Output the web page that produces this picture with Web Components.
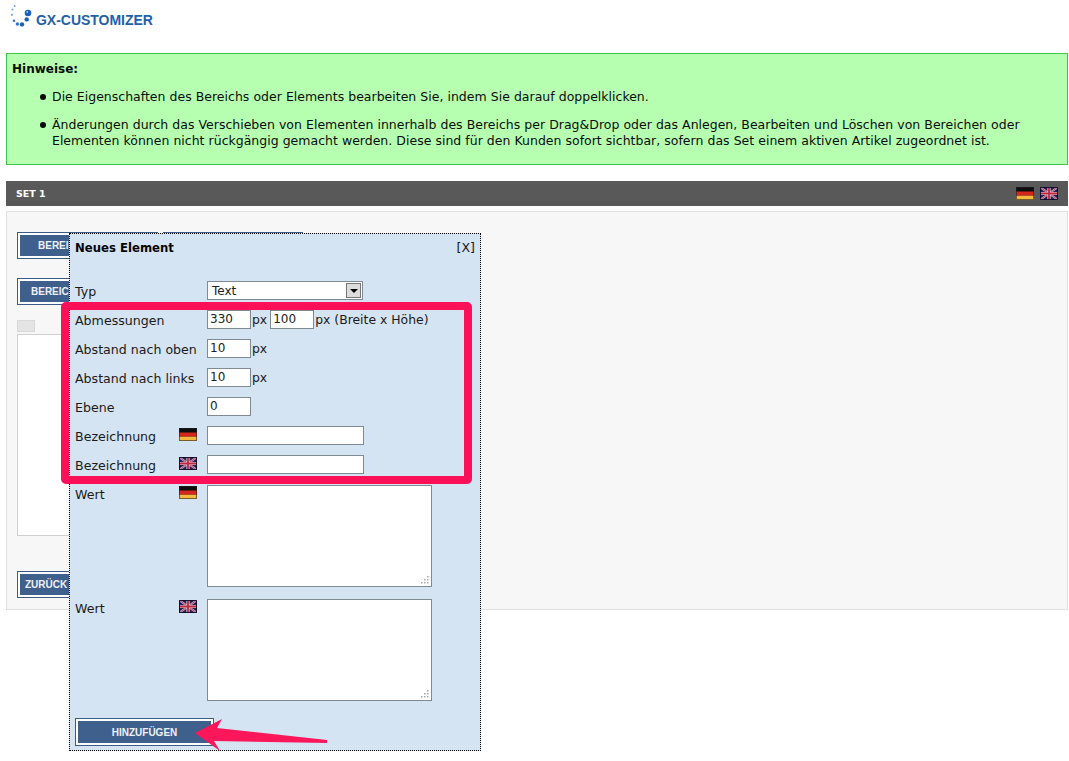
<!DOCTYPE html>
<html lang="de"><head><meta charset="utf-8"><title>GX-Customizer</title>
<style>
html,body{margin:0;padding:0;background:#fff}
body{font:12px "DejaVu Sans",Verdana,sans-serif;color:#111;width:1069px;height:761px;overflow:hidden;position:relative}
</style></head><body>
<gx-page>
  <gx-header slot="header">GX-CUSTOMIZER</gx-header>
  <gx-notice slot="notice" title-text="Hinweise:">
    <li>Die Eigenschaften des Bereichs oder Elements bearbeiten Sie, indem Sie darauf doppelklicken.</li>
    <li>Änderungen durch das Verschieben von Elementen innerhalb des Bereichs per Drag&amp;Drop oder das Anlegen, Bearbeiten und Löschen von Bereichen oder Elementen können nicht rückgängig gemacht werden. Diese sind für den Kunden sofort sichtbar, sofern das Set einem aktiven Artikel zugeordnet ist.</li>
  </gx-notice>
  <gx-setbar slot="bar">SET 1</gx-setbar>
  <gx-workspace slot="work"></gx-workspace>
</gx-page>
<gx-modal>
  <span slot="title">Neues Element</span>
  <gx-row label="Typ"><gx-select>Text</gx-select></gx-row>
  <gx-row label="Abmessungen"><gx-input w="44">330</gx-input><span>px</span><gx-input w="44">100</gx-input><span>px (Breite x Höhe)</span></gx-row>
  <gx-row label="Abstand nach oben"><gx-input w="44">10</gx-input><span>px</span></gx-row>
  <gx-row label="Abstand nach links"><gx-input w="44">10</gx-input><span>px</span></gx-row>
  <gx-row label="Ebene"><gx-input w="44">0</gx-input></gx-row>
  <gx-row label="Bezeichnung" flag="de"><gx-input w="157"></gx-input></gx-row>
  <gx-row label="Bezeichnung" flag="en"><gx-input w="157"></gx-input></gx-row>
  <gx-area label="Wert" flag="de"></gx-area>
  <gx-area label="Wert" flag="en"></gx-area>
  <gx-button slot="foot" w="139" h="28">HINZUFÜGEN</gx-button>
</gx-modal>
<gx-annotations></gx-annotations>
<script>
function def(name, html){
  customElements.define(name, class extends HTMLElement{
    constructor(){super();this.attachShadow({mode:'open'}).innerHTML=typeof html==='function'?html(this):html;}
  });
}
const FLAGS={
 de:`<svg width="18" height="13" viewBox="0 0 18 13" style="display:block"><rect width="18" height="13" fill="#0d0d0d"/><rect y="4.5" width="18" height="4.2" fill="#d3261c"/><rect y="8.7" width="18" height="4.3" fill="#f2b93e"/><rect x=".5" y=".5" width="17" height="12" fill="none" stroke="#222" stroke-opacity=".6"/></svg>`,
 en:`<svg width="18" height="13" viewBox="0 0 18 13" style="display:block"><rect width="18" height="13" fill="#1f2158"/><path d="M0 0L18 13M18 0L0 13" stroke="#d9a9bc" stroke-width="2"/><path d="M0 0L18 13M18 0L0 13" stroke="#a83a5a" stroke-width=".8"/><path d="M9 0V13M0 6.5H18" stroke="#e2d2da" stroke-width="3.2"/><path d="M9 0V13M0 6.5H18" stroke="#bd2640" stroke-width="1.8"/><rect x=".5" y=".5" width="17" height="12" fill="none" stroke="#0c0c28" stroke-opacity=".9"/></svg>`
};
def('gx-flag', el=>`<style>:host{display:block;width:18px;height:13px}</style>${FLAGS[el.getAttribute('code')]||''}`);

def('gx-page',`<style>:host{display:block;padding:0 1px 0 6px}
 ::slotted(gx-notice){margin-bottom:16px}
 ::slotted(gx-setbar){margin-bottom:5px}
</style><slot name="header"></slot><slot name="notice"></slot><slot name="bar"></slot><slot name="work"></slot>`);

def('gx-header',`<style>:host{display:flex;align-items:flex-start;height:53px;margin-left:3px;font:bold 14px "Liberation Sans",Arial,sans-serif;color:#1f62a8}
 svg{display:block;margin-top:4px;flex:none} span{margin:12px 0 0 3px;line-height:16px;letter-spacing:-.03px}</style>
 <svg width="24" height="24" viewBox="0 0 24 24">
 <g fill="#6ea4e0"><circle cx="5.6" cy="1.9" r="1"/><circle cx="3.4" cy="5.6" r="1"/><circle cx="2.9" cy="10.8" r="1.1"/></g>
 <g fill="#2f78cf"><circle cx="5" cy="16.8" r="1.3"/><circle cx="8.4" cy="20" r="1.7"/></g>
 <g fill="#1a5fba"><circle cx="13" cy="20.4" r="2.2"/><circle cx="17.7" cy="15.4" r="2.2"/><circle cx="19" cy="9" r="3.3"/></g><circle cx="18.2" cy="8" r="1" fill="#9cc8f2"/></svg><span><slot></slot></span>`);

def('gx-notice',el=>`<style>:host{display:block;box-sizing:border-box;height:112px;background:#b6ffb1;border:1px solid #3fc64a;padding:7px 5px;font-size:12.5px;line-height:16px;color:#0c0c0c}
 b{display:block;line-height:16px;font-size:12px}
 ul{margin:12px 0 0;padding:0 0 0 40px}
 ::slotted(li){list-style:none;position:relative;margin-bottom:12px;word-spacing:.1px}
 ::slotted(li)::before{content:"";position:absolute;left:-12px;top:5px;width:6px;height:6px;border-radius:50%;background:#0a0a0a}
</style><b>${el.getAttribute('title-text')}</b><ul><slot></slot></ul>`);

def('gx-setbar',`<style>:host{display:flex;align-items:center;justify-content:space-between;box-sizing:border-box;height:25px;background:#595959;padding:0 10px;color:#fff;font:bold 9.5px "DejaVu Sans",Verdana,sans-serif}
 .f{display:flex;gap:6px}</style><span><slot></slot></span><span class="f"><gx-flag code="de"></gx-flag><gx-flag code="en"></gx-flag></span>`);

def('gx-button',el=>{const l=el.getAttribute('pad');return `<style>:host{display:block;box-sizing:border-box;width:${el.getAttribute('w')}px;height:${el.getAttribute('h')}px;border:1px solid #3c5a85;padding:2px;background:#fff;flex:none}
 div{height:100%;background:#3f5f8c;color:#eef2f8;display:flex;align-items:center;justify-content:${l?'flex-start':'center'};padding-left:${l||0}px;box-sizing:border-box;font:bold 10px "Liberation Sans",Arial,sans-serif;white-space:nowrap}</style><div><slot></slot></div>`});

def('gx-workspace',`<style>:host{display:block;box-sizing:border-box;height:399px;background:#f7f7f7;border:1px solid #e0e0e0;padding:20px 10px 0}
 .r{display:flex;gap:5px}
 .second{margin-top:19px}
 .tab{width:18px;height:12px;background:#e4e4e4;border:1px solid #d8d8d8;box-sizing:border-box;margin-top:15px}
 .box{box-sizing:border-box;width:440px;height:202px;background:#fff;border:1px solid #d0d0d0;margin-top:2px}
 .back{margin-top:35px}
 </style>
 <div class="r"><gx-button w="141" h="27" pad="18">BEREI</gx-button><gx-button w="140" h="27"></gx-button></div>
 <div class="second"><gx-button w="141" h="27" pad="11">BEREIC</gx-button></div>
 <div class="tab"></div><div class="box"></div>
 <div class="back"><gx-button w="100" h="27" pad="5">ZURÜCK</gx-button></div>`);

def('gx-modal',`<style>:host{position:absolute;left:69px;top:233px;box-sizing:border-box;width:412px;height:518px;background:#d5e4f2;border:1px dotted #000;padding:6px 5px 0 5px;display:block;font-size:12.6px;color:#1a1a1a}
 header{display:flex;justify-content:space-between;height:41px;line-height:16px}
 header b{font-weight:bold;font-size:11.7px;color:#050505}
 ::slotted(gx-area:first-of-type){margin-top:1px}
 .f{margin-top:5px}
</style><header><b><slot name="title"></slot></b><span>[X]</span></header><slot></slot><div class="f"><slot name="foot"></slot></div>`);

def('gx-row',el=>{const f=el.getAttribute('flag');return `<style>:host{display:grid;grid-template-columns:104px 28px 1fr;height:29px;align-items:start}
 .l{white-space:nowrap;line-height:19px;padding-top:1px} .fl{padding-top:2px}
 .c{display:flex;align-items:center;height:19px;white-space:nowrap}
 ::slotted(span){margin:0 3px 0 1px;font-size:12.4px}</style><span class="l">${el.getAttribute('label')}</span><span class="fl">${f?`<gx-flag code="${f}"></gx-flag>`:''}</span><div class="c"><slot></slot></div>`});

def('gx-input',el=>`<style>:host{display:block;box-sizing:border-box;width:${el.getAttribute('w')}px;height:19px;background:#fff;border:1px solid #7f8a94;padding:0 2px;line-height:17px;font-size:12px;flex:none;color:#222}</style><slot></slot>`);

def('gx-select',`<style>:host{display:flex;align-items:center;justify-content:space-between;box-sizing:border-box;width:156px;height:19px;background:#fff;border:1px solid #7f8a94;padding:0 1px 0 4px;font-size:12px;color:#222}
 i{display:flex;align-items:center;justify-content:center;width:15px;height:15px;background:#dcdcdc;border:1px solid #777;box-sizing:border-box}
 i::after{content:"";border:4px solid transparent;border-top:4px solid #000;border-bottom:0}</style><slot></slot><i></i>`);

def('gx-area',el=>`<style>:host{display:grid;grid-template-columns:104px 28px 1fr;height:114px;align-items:start}
 .fl{padding-top:1px} .l{line-height:19px}
 .w{position:relative;width:225px;height:102px}
 textarea{display:block;box-sizing:border-box;width:225px;height:102px;background:#fff;border:1px solid #7f8a94;margin:0;padding:2px;outline:0;resize:none}
 svg{position:absolute;right:3px;bottom:3px}</style>
 <span class="l">${el.getAttribute('label')}</span><span class="fl"><gx-flag code="${el.getAttribute('flag')}"></gx-flag></span>
 <div class="w"><textarea aria-label="${el.getAttribute('label')}"></textarea><svg width="8" height="8" viewBox="0 0 8 8"><g fill="#a8a8a8"><rect x="6" width="1.5" height="1.5"/><rect x="3" y="3" width="1.5" height="1.5"/><rect x="6" y="3" width="1.5" height="1.5"/><rect y="6" width="1.5" height="1.5"/><rect x="3" y="6" width="1.5" height="1.5"/><rect x="6" y="6" width="1.5" height="1.5"/></g></svg></div>`);

def('gx-annotations',`<style>:host{position:absolute;left:0;top:0;width:1069px;height:761px;pointer-events:none;display:block}
 .rect{position:absolute;left:61px;top:302px;width:411px;height:182px;box-sizing:border-box;border:8px solid #fd1058;border-radius:5px}
 svg{position:absolute;left:0;top:0}</style><div class="rect"></div>
 <svg width="1069" height="761"><path d="M195 733L222 719L217 728L327 740L327 743L214 741L220 751Z" fill="#fb175a"/></svg>`);
</script></body></html>
